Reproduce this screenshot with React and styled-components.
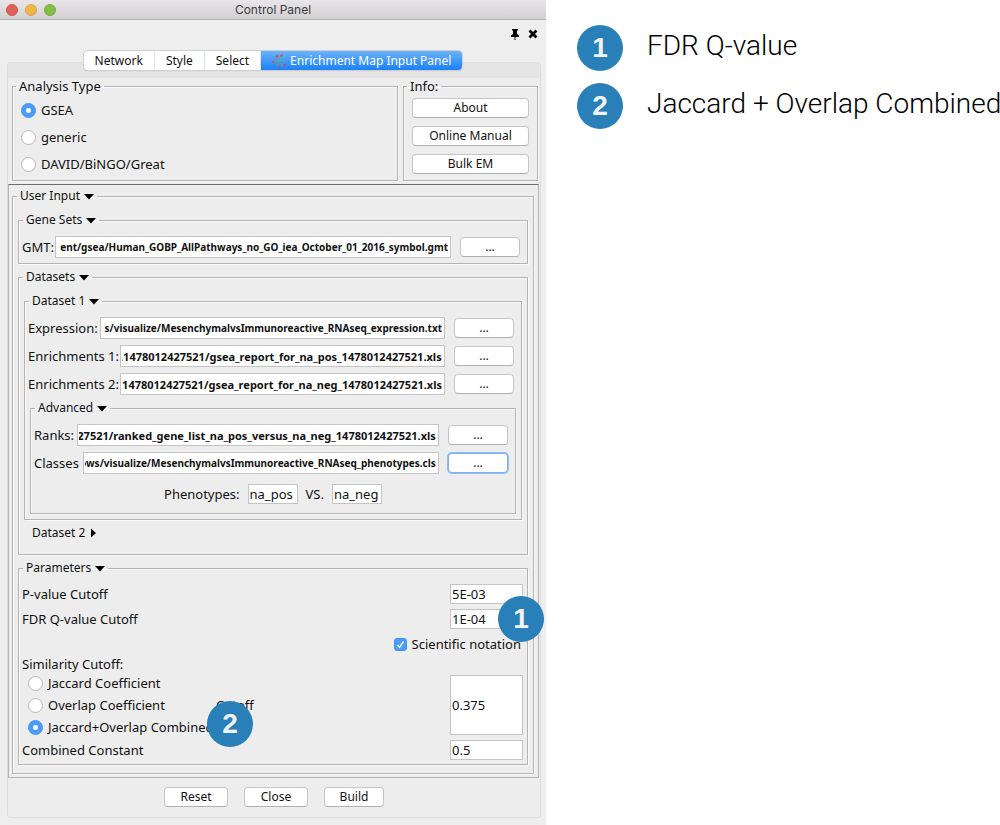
import React, { useLayoutEffect, useRef, useState } from "react";
import styled, { createGlobalStyle, css } from "styled-components";

const GlobalStyle = createGlobalStyle`
  *, *::before, *::after { box-sizing: border-box; }
  body { margin: 0; background: #fff; }
  body, button, input { font-family: "Noto Sans", "Open Sans", sans-serif; font-size: 13px; line-height: 16px; color: #111; }
`;

const Page = styled.main`
  display: grid;
  grid-template-columns: minmax(0, 273fr) minmax(0, 227fr);
  min-height: 100vh;
  overflow: hidden;
`;

const Window = styled.section`
  display: flex;
  flex-direction: column;
  background: #eeeeee;
`;

const TitleBar = styled.header`
  display: grid;
  grid-template-columns: 1fr auto 1fr;
  align-items: center;
  height: 20px;
  padding: 0 6px;
  background: linear-gradient(#e9e6e9, #d3d0d3);
  border-bottom: 1px solid #b3b0b3;
`;

const Lights = styled.div`
  display: flex;
  gap: 7px;
`;

const Light = styled.button`
  width: 12px;
  height: 12px;
  padding: 0;
  border: 1px solid ${(p) => p.$edge};
  border-radius: 50%;
  background: ${(p) => p.$fill};
`;

const WindowTitle = styled.h1`
  margin: 0;
  font: 400 12px/16px Inter, sans-serif;
  color: #3c3c3c;
`;

const Tools = styled.div`
  display: flex;
  justify-content: flex-end;
  gap: 6px;
  height: 31px;
  padding: 8px 7px 0 0;
`;

const ToolButton = styled.button`
  display: flex;
  width: 12px;
  height: 12px;
  padding: 0;
  border: 0;
  background: none;
`;

const Tabs = styled.nav`
  position: relative;
  z-index: 1;
  display: flex;
  align-self: center;
  border-radius: 4px;
  background: #fff;
  box-shadow: 0 0 0 1px #cfcfcf, 0 1px 1px #a0a0a0;
`;

const Tab = styled.button`
  display: flex;
  align-items: center;
  justify-content: center;
  gap: 4px;
  height: 19px;
  padding: 0 11px;
  border: 0;
  border-right: 1px solid #e2e2e2;
  background: none;
  font-size: 12px;
  white-space: nowrap;
  ${(p) =>
    p.$active &&
    css`
      border: 0;
      border-radius: 0 4px 4px 0;
      color: #fff;
      background: linear-gradient(#6cb3fa, #1a80fb);
    `}
`;

const Panel = styled.div`
  margin: -8px 5px 6px 7px;
  padding-top: 15px;
  border: 1px solid #dedede;
  border-radius: 3px;
  background: linear-gradient(#e5e5e5 15px, #ededed 15px);
`;

const TopRow = styled.div`
  display: grid;
  grid-template-columns: minmax(0, 1fr) 135px;
  gap: 5px;
  padding: 0 2px 3px 4px;
`;

const Box = styled.fieldset`
  min-width: 0;
  margin: 0;
  padding: 0 3px ${(p) => p.$bottom ?? 5}px;
  border: 1px solid #b4b4b4;
  box-shadow: 1px 1px 0 #f8f8f8, inset 1px 1px 0 #f8f8f8;
`;

const Legend = styled.legend`
  margin-left: ${(p) => p.$inset ?? 1}px;
  padding: 0 3px;
  height: 16px;
  white-space: nowrap;
`;

const Toggle = styled.button`
  display: flex;
  align-items: center;
  gap: 4px;
  padding: 0;
  border: 0;
  background: none;
  font-size: 12px;
  white-space: nowrap;
`;

const Stack = styled.div`
  display: flex;
  flex-direction: column;
  gap: ${(p) => p.$gap ?? 5}px;
  padding: ${(p) => p.$pad ?? "8px 2px 0"};
`;

const Choice = styled.label`
  position: relative;
  display: flex;
  align-items: center;
  gap: 5px;
  height: ${(p) => p.$height ?? 22}px;
  white-space: nowrap;
`;

const Radio = styled.input.attrs({ type: "radio" })`
  appearance: none;
  width: 15px;
  height: 15px;
  margin: 0;
  border: 1px solid #b8b8b8;
  border-radius: 50%;
  background: #fff;
  &:checked {
    border-color: #3f93f5;
    background: radial-gradient(#fff 0 2px, #4a9cfa 3px);
  }
`;

const Checkbox = styled.input.attrs({ type: "checkbox" })`
  appearance: none;
  width: 13px;
  height: 13px;
  margin: 0;
  border: 1px solid #b8b8b8;
  border-radius: 3px;
  background: #fff;
  &:checked {
    border-color: #3f93f5;
    background: #4a9cfa
      url("data:image/svg+xml,%3Csvg xmlns='http://www.w3.org/2000/svg' viewBox='0 0 11 11'%3E%3Cpath d='M2.5 6l2 2.3L8.5 2.5' fill='none' stroke='white' stroke-width='1.4'/%3E%3C/svg%3E");
  }
`;

const Button = styled.button`
  height: 20px;
  padding: 0;
  width: ${(p) => p.$width ?? "auto"};
  border: 1px solid #c6c6c6;
  border-bottom-color: #b0b0b0;
  border-radius: 4px;
  background: #fff;
  font-size: 12px;
  line-height: 16px;
  flex: none;
  ${(p) =>
    p.$focused &&
    css`
      border-color: #7fb2f0;
      box-shadow: 0 0 0 1px #8fbdf3;
    `}
`;

const FileLine = styled.div`
  display: flex;
  align-items: center;
  gap: 9px;
  padding-right: 4px;
`;

const FileLabel = styled.label`
  flex: none;
  width: ${(p) => p.$width}px;
  margin-right: -9px;
  white-space: nowrap;
`;

const PathInput = styled.input`
  flex: 1;
  min-width: 0;
  height: 22px;
  padding: 0 2px 0 1px;
  border: 1px solid #c4c4c4;
  background: #fff;
  font-size: ${(p) => (p.$compact ? 10 : 11)}px;
  font-weight: 700;
  text-align: right;
`;

const ValueInput = styled.input`
  width: ${(p) => p.$width ?? 73}px;
  height: ${(p) => p.$height ?? 20}px;
  padding: 0 1px;
  border: 1px solid #c4c4c4;
  background: #fff;
`;

const Phenotypes = styled.div`
  display: flex;
  align-items: center;
  justify-content: center;
  gap: 8px;
  padding: 4px 0;
`;

const Scroll = styled.div`
  padding: 3px 4px 3px 3px;
  margin-right: 1px;
  border: 1px solid #b4b4b4;
  border-top-color: #6e6e6e;
`;

const Field = styled.div`
  position: relative;
  display: flex;
  align-items: center;
  justify-content: space-between;
`;

const CheckLine = styled.div`
  display: flex;
  justify-content: flex-end;
  padding-right: 2px;
`;

const Similarity = styled.div`
  display: flex;
  align-items: center;
`;

const Radios = styled.div`
  width: 194px;
  padding-left: 6px;
`;

const CutoffLabel = styled.label`
  flex: 1;
`;

const Actions = styled.footer`
  display: flex;
  justify-content: center;
  gap: 16px;
  padding: 9px 0 10px;
`;

const Badge = styled.span`
  display: flex;
  align-items: center;
  justify-content: center;
  flex: none;
  width: 46px;
  height: 46px;
  border-radius: 50%;
  background: #2980b9;
  color: #f0f3f6;
  font: 700 28px/28px "Liberation Sans", sans-serif;
`;

const FdrBadge = styled(Badge)`
  position: absolute;
  right: -21px;
  top: -13px;
`;

const CombinedBadge = styled(Badge)`
  position: absolute;
  left: 179px;
  top: -15px;
`;

const Notes = styled.ol`
  display: flex;
  flex-direction: column;
  gap: 12px;
  margin: 0;
  padding: 25px 0 0 31px;
  list-style: none;
`;

const Note = styled.li`
  display: flex;
  align-items: flex-start;
  gap: 24px;
  font: 300 28px/42px Roboto, sans-serif;
  color: #000;
  white-space: nowrap;
`;

const Arrow = ({ open = true }) => (
  <svg width="10" height="10" viewBox="0 0 10 10" aria-hidden="true">
    <path d={open ? "M0 3h10L5 8.500z" : "M2 0.500v9l5-4.500z"} fill="#000" />
  </svg>
);

const PinIcon = () => (
  <svg width="12" height="12" viewBox="0 0 12 12" aria-hidden="true">
    <path d="M3 1h6v1.500H8V6l2 1.500V9H6.500v3h-1V9H2V7.500L4 6V2.500H3z" fill="#000" />
  </svg>
);

const CloseIcon = () => (
  <svg width="12" height="12" viewBox="0 0 12 12" aria-hidden="true">
    <path d="M3.500 3.500l5 5M8.500 3.500l-5 5" stroke="#000" strokeWidth="2.800" strokeLinecap="square" />
  </svg>
);

const NetworkIcon = () => (
  <svg width="14" height="14" viewBox="0 0 14 14" aria-hidden="true">
    <g fill="none" stroke="#5fae8c" strokeWidth="1" strokeDasharray="2 1">
      <path d="M5 2.500l4.500-1L12 11l-5 1.500L1.500 8z" />
      <path d="M5 2.500l2 10M9.500 1.500L6 8l6 3M1.500 8l8-2" />
    </g>
    <g fill="#cf4f5c">
      <circle cx="5" cy="2.500" r="1.200" />
      <circle cx="9.500" cy="1.500" r="1.200" />
      <circle cx="1.500" cy="8" r="1.200" />
      <circle cx="12" cy="11" r="1.200" />
      <circle cx="7" cy="12.500" r="1.200" />
    </g>
  </svg>
);

function Section({ title, open = true, bottom, children }) {
  return (
    <Box $bottom={bottom}>
      <Legend>
        <Toggle type="button" aria-expanded={open}>
          {title}
          <Arrow open={open} />
        </Toggle>
      </Legend>
      {children}
    </Box>
  );
}

function FileRow({ id, label, width, value, focused, compact }) {
  const ref = useRef(null);
  useLayoutEffect(() => {
    ref.current.scrollLeft = ref.current.scrollWidth;
  }, []);
  return (
    <FileLine>
      <FileLabel htmlFor={id} $width={width}>{label}</FileLabel>
      <PathInput id={id} ref={ref} $compact={compact} defaultValue={value} />
      <Button type="button" $width="60px" $focused={focused} aria-label={`Browse ${label}`}>...</Button>
    </FileLine>
  );
}

const analysisTypes = ["GSEA", "generic", "DAVID/BiNGO/Great"];

export default function App() {
  const [analysis, setAnalysis] = useState("GSEA");
  const [metric, setMetric] = useState("combined");
  return (
    <>
      <GlobalStyle />
      <Page>
        <Window>
          <TitleBar>
            <Lights>
              <Light aria-label="Close window" $fill="#e0605a" $edge="#cc5650" />
              <Light aria-label="Minimize window" $fill="#efb64c" $edge="#dba443" />
              <Light aria-label="Zoom window" $fill="#82bf47" $edge="#74ad3d" />
            </Lights>
            <WindowTitle>Control Panel</WindowTitle>
          </TitleBar>
          <Tools>
            <ToolButton aria-label="Pin"><PinIcon /></ToolButton>
            <ToolButton aria-label="Close"><CloseIcon /></ToolButton>
          </Tools>
          <Tabs>
            <Tab>Network</Tab>
            <Tab>Style</Tab>
            <Tab>Select</Tab>
            <Tab $active><NetworkIcon />Enrichment Map Input Panel</Tab>
          </Tabs>
          <Panel>
            <TopRow>
              <Box>
                <Legend $inset={0}>Analysis Type</Legend>
                <Stack $pad="5px 5px 0">
                  {analysisTypes.map((name) => (
                    <Choice key={name}>
                      <Radio name="analysis" checked={analysis === name} onChange={() => setAnalysis(name)} />
                      {name}
                    </Choice>
                  ))}
                </Stack>
              </Box>
              <Box>
                <Legend $inset={0}>Info:</Legend>
                <Stack $pad="4px 5px 0" $gap={8}>
                  <Button type="button">About</Button>
                  <Button type="button">Online Manual</Button>
                  <Button type="button">Bulk EM</Button>
                </Stack>
              </Box>
            </TopRow>
            <Scroll>
              <Section title="User Input" bottom={8}>
                <Stack>
                  <Section title="Gene Sets">
                    <Stack $pad="8px 0 0">
                      <FileRow id="gmt" label="GMT:" width={33} compact value="ent/gsea/Human_GOBP_AllPathways_no_GO_iea_October_01_2016_symbol.gmt" />
                    </Stack>
                  </Section>
                  <Section title="Datasets" bottom={13}>
                    <Stack>
                      <Section title="Dataset 1">
                        <Stack $pad="8px 0 5px" $gap={6}>
                          <FileRow id="expression" label="Expression:" width={72} compact value="s/visualize/MesenchymalvsImmunoreactive_RNAseq_expression.txt" />
                          <FileRow id="enrichments1" label="Enrichments 1:" width={92} value=".1478012427521/gsea_report_for_na_pos_1478012427521.xls" />
                          <FileRow id="enrichments2" label="Enrichments 2:" width={92} value="1478012427521/gsea_report_for_na_neg_1478012427521.xls" />
                        </Stack>
                        <Stack $pad="0 2px">
                          <Section title="Advanced">
                            <Stack $pad="8px 0 0" $gap={6}>
                              <FileRow id="ranks" label="Ranks:" width={43} value="427521/ranked_gene_list_na_pos_versus_na_neg_1478012427521.xls" />
                              <FileRow id="classes" label="Classes" width={49} compact value="ows/visualize/MesenchymalvsImmunoreactive_RNAseq_phenotypes.cls" focused />
                              <Phenotypes>
                                <label htmlFor="pos">Phenotypes:</label>
                                <ValueInput id="pos" $width={50} defaultValue="na_pos" />
                                <label htmlFor="neg">VS.</label>
                                <ValueInput id="neg" $width={50} defaultValue="na_neg" />
                              </Phenotypes>
                            </Stack>
                          </Section>
                        </Stack>
                      </Section>
                      <Stack $pad="0 8px">
                        <Toggle type="button" aria-expanded="false">Dataset 2<Arrow open={false} /></Toggle>
                      </Stack>
                    </Stack>
                  </Section>
                  <Section title="Parameters" bottom={4}>
                    <Stack $pad="8px 1px 0 0">
                      <Field>
                        <label htmlFor="pvalue">P-value Cutoff</label>
                        <ValueInput id="pvalue" defaultValue="5E-03" />
                      </Field>
                      <Field>
                        <label htmlFor="qvalue">FDR Q-value Cutoff</label>
                        <ValueInput id="qvalue" defaultValue="1E-04" />
                        <FdrBadge>1</FdrBadge>
                      </Field>
                      <CheckLine>
                        <Choice $height={20}>
                          <Checkbox defaultChecked />
                          Scientific notation
                        </Choice>
                      </CheckLine>
                    </Stack>
                    <Stack $pad="2px 1px 0 0" $gap={0}>
                      <div>Similarity Cutoff:</div>
                      <Similarity>
                        <Radios>
                          <Choice>
                            <Radio name="metric" checked={metric === "jaccard"} onChange={() => setMetric("jaccard")} />
                            Jaccard Coefficient
                          </Choice>
                          <Choice>
                            <Radio name="metric" checked={metric === "overlap"} onChange={() => setMetric("overlap")} />
                            Overlap Coefficient
                          </Choice>
                          <Choice>
                            <Radio name="metric" checked={metric === "combined"} onChange={() => setMetric("combined")} />
                            Jaccard+Overlap Combined
                            <CombinedBadge>2</CombinedBadge>
                          </Choice>
                        </Radios>
                        <CutoffLabel htmlFor="cutoff">Cutoff</CutoffLabel>
                        <ValueInput id="cutoff" $height={60} defaultValue="0.375" />
                      </Similarity>
                    </Stack>
                    <Stack $pad="2px 1px 0 0">
                      <Field>
                        <label htmlFor="constant">Combined Constant</label>
                        <ValueInput id="constant" defaultValue="0.5" />
                      </Field>
                    </Stack>
                  </Section>
                </Stack>
              </Section>
            </Scroll>
            <Actions>
              <Button type="button" $width="64px">Reset</Button>
              <Button type="button" $width="64px">Close</Button>
              <Button type="button" $width="60px">Build</Button>
            </Actions>
          </Panel>
        </Window>
        <Notes>
          <Note><Badge>1</Badge>FDR Q-value</Note>
          <Note><Badge>2</Badge>Jaccard + Overlap Combined</Note>
        </Notes>
      </Page>
    </>
  );
}
